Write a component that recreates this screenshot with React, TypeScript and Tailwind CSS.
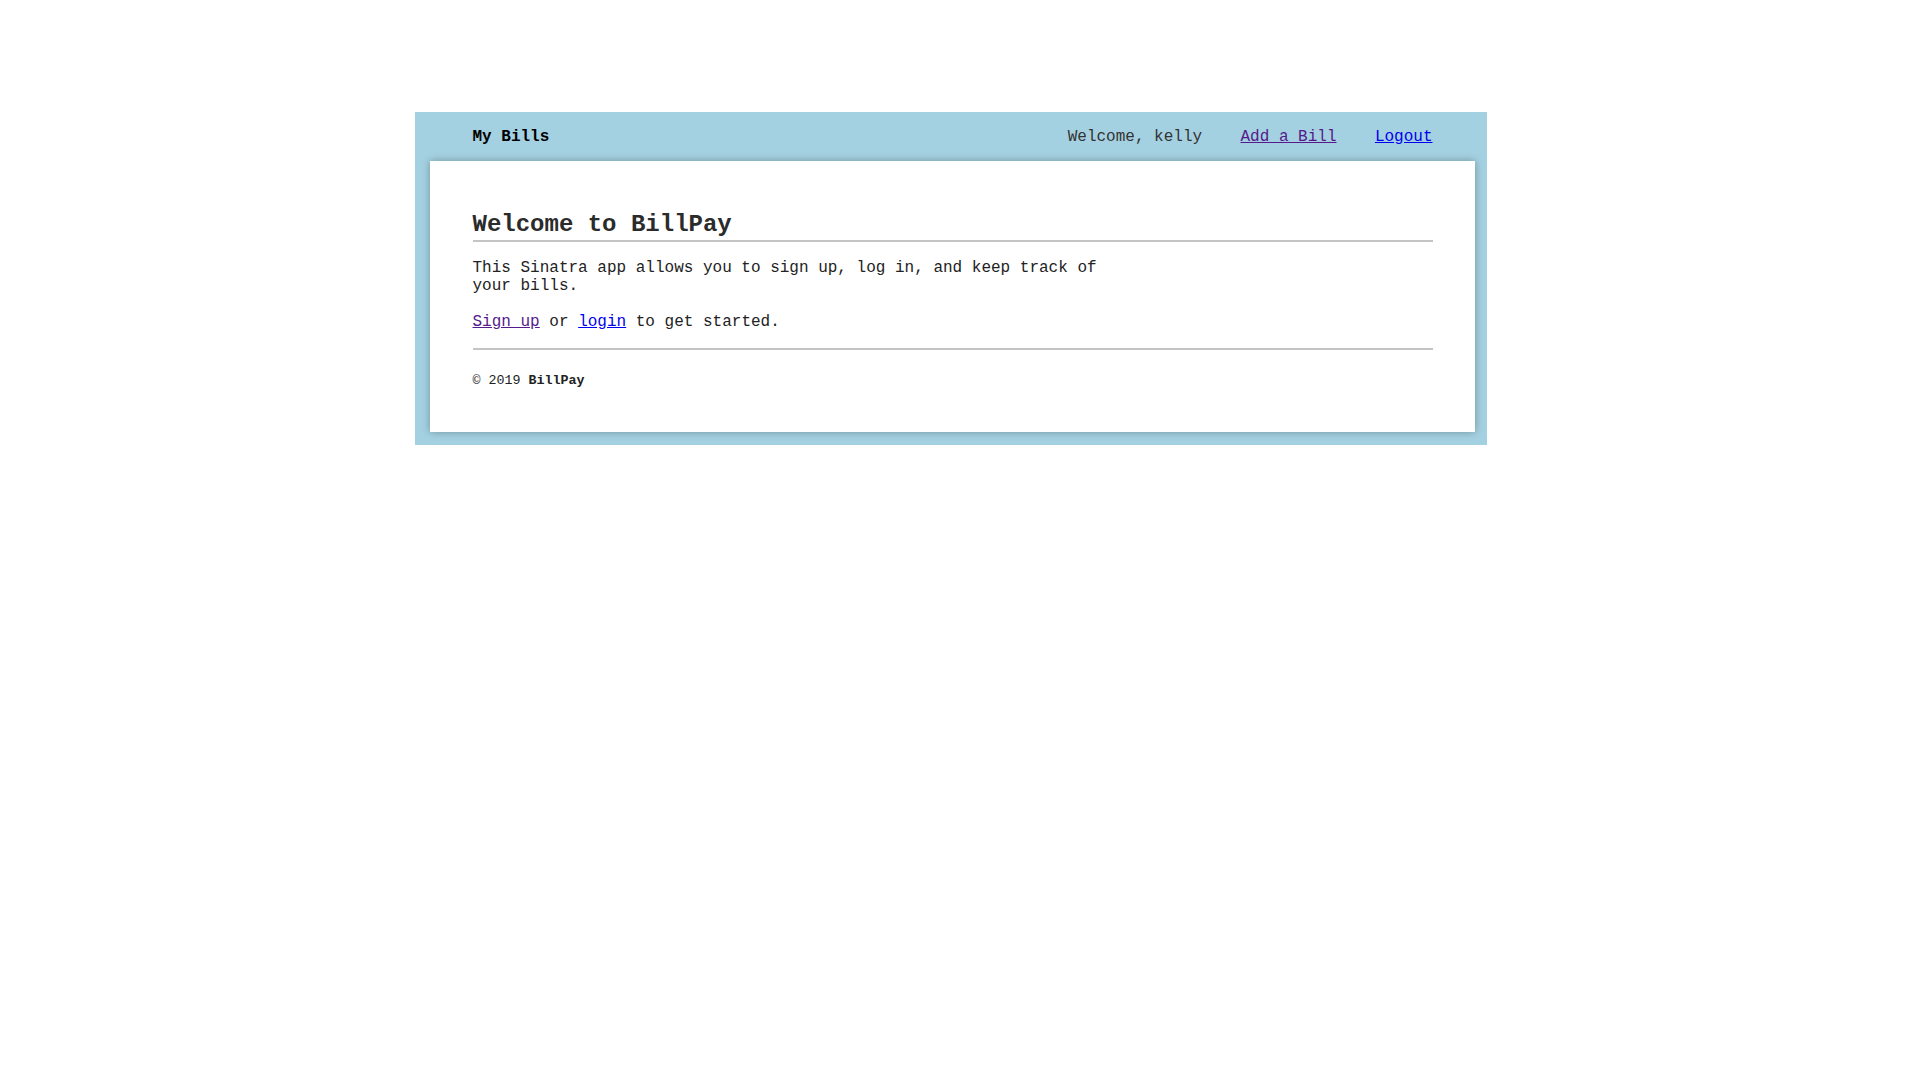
export default function App() {
	return (
		<div className="min-h-[1080px] bg-white pt-[112px] font-['Liberation_Mono',_'Courier_New',_monospace] text-[16px] text-[#222]">
			<div className="ml-[415px] w-[1072px] bg-[#a4d1e1] pb-[13px]">
				<header className="ml-[57.5px] flex h-[49px] w-[960px] items-center justify-between leading-[18px]">
					<span className="font-bold text-black">My Bills</span>
					<nav className="flex items-center gap-[38.4px]">
						<span className="text-[#333]">Welcome, kelly</span>
						<a href="#" className="text-[#551a8b] underline">
							Add a Bill
						</a>
						<a href="#" className="text-[#0000ee] underline">
							Logout
						</a>
					</nav>
				</header>
				<main className="ml-[15px] w-[1045px] bg-white px-[42.5px] pt-[50px] pb-[44px] shadow-[0_0_8px_rgba(0,0,0,0.3)]">
					<h1 className="border-b-2 border-[#c4c4c4] pb-[2px] text-[24px] leading-[27px] font-bold text-[#2b2b2b]">
						Welcome to BillPay
					</h1>
					<p className="mt-[17px] max-w-[640px] leading-[18px]">
						This Sinatra app allows you to sign up, log in, and keep track of your bills.
					</p>
					<p className="mt-[18px] leading-[18px]">
						<a href="#" className="text-[#551a8b] underline">
							Sign up
						</a>{' '}
						or{' '}
						<a href="#" className="text-[#0000ee] underline">
							login
						</a>{' '}
						to get started.
					</p>
					<footer className="mt-[17px] border-t-2 border-[#c4c4c4] pt-[23px] text-[13.33px] leading-[15px]">
						© 2019 <b className="font-bold">BillPay</b>
					</footer>
				</main>
			</div>
		</div>
	)
}
